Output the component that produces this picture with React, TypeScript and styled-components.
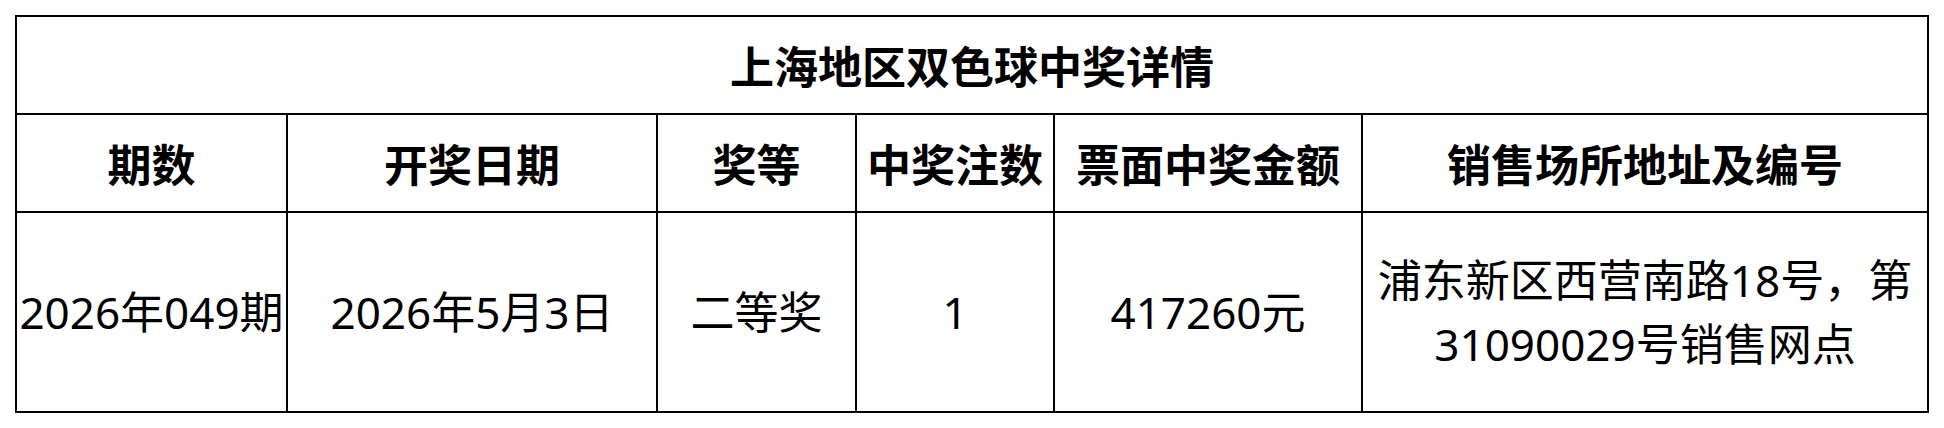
import styled, { createGlobalStyle } from "styled-components"

const GlobalStyle = createGlobalStyle`
  html, body {
    margin: 0;
    padding: 0;
    background: #ffffff;
  }
  body {
    font-family: "Noto Sans CJK SC", "Noto Sans", sans-serif;
    color: #000000;
  }
`;

const Wrapper = styled.section`
  padding: 15px 0 0 15px;
`;

const Table = styled.table`
  width: 1914px;
  border-collapse: collapse;
  table-layout: fixed;
  border: 2px solid #000;
`;

const Row = styled.tr<{ $height: number }>`
  height: ${props => props.$height}px;
`;

const TitleCell = styled.th`
  border: 2px solid #000;
  font-size: 44px;
  font-weight: 700;
  line-height: 1.2;
  text-align: center;
  vertical-align: middle;
  padding: 0;
`;

const HeadCell = styled.th`
  border: 2px solid #000;
  font-size: 44px;
  font-weight: 700;
  line-height: 1.2;
  text-align: center;
  vertical-align: middle;
  padding: 0;
  white-space: nowrap;
`;

// digits come from Noto Sans (a bit wider, closer to the original), CJK from Noto CJK
const Cell = styled.td`
  border: 2px solid #000;
  font-family: "Noto Sans", "Noto Sans CJK SC", sans-serif;
  font-size: 44px;
  font-weight: 400;
  line-height: 64px;
  text-align: center;
  vertical-align: middle;
  padding: 0 2px;
`;

const columns = [271, 370, 199, 198, 308, 566]

const headers = ["期数", "开奖日期", "奖等", "中奖注数", "票面中奖金额", "销售场所地址及编号"]

const row = [
  "2026年049期",
  "2026年5月3日",
  "二等奖",
  "1",
  "417260元",
  "浦东新区西营南路18号，第31090029号销售网点",
]

const App = () => {
  return (
    <Wrapper>
      <GlobalStyle />
      <Table>
        <colgroup>
          {columns.map((w, i) => (
            <col key={i} style={{ width: w }} />
          ))}
        </colgroup>
        <thead>
          <Row $height={98}>
            <TitleCell colSpan={6}>上海地区双色球中奖详情</TitleCell>
          </Row>
          <Row $height={98}>
            {headers.map((h) => (
              <HeadCell key={h}>{h}</HeadCell>
            ))}
          </Row>
        </thead>
        <tbody>
          <Row $height={200}>
            {row.map((v, i) => (
              <Cell key={i}>{v}</Cell>
            ))}
          </Row>
        </tbody>
      </Table>
    </Wrapper>
  )
}

export default App;
